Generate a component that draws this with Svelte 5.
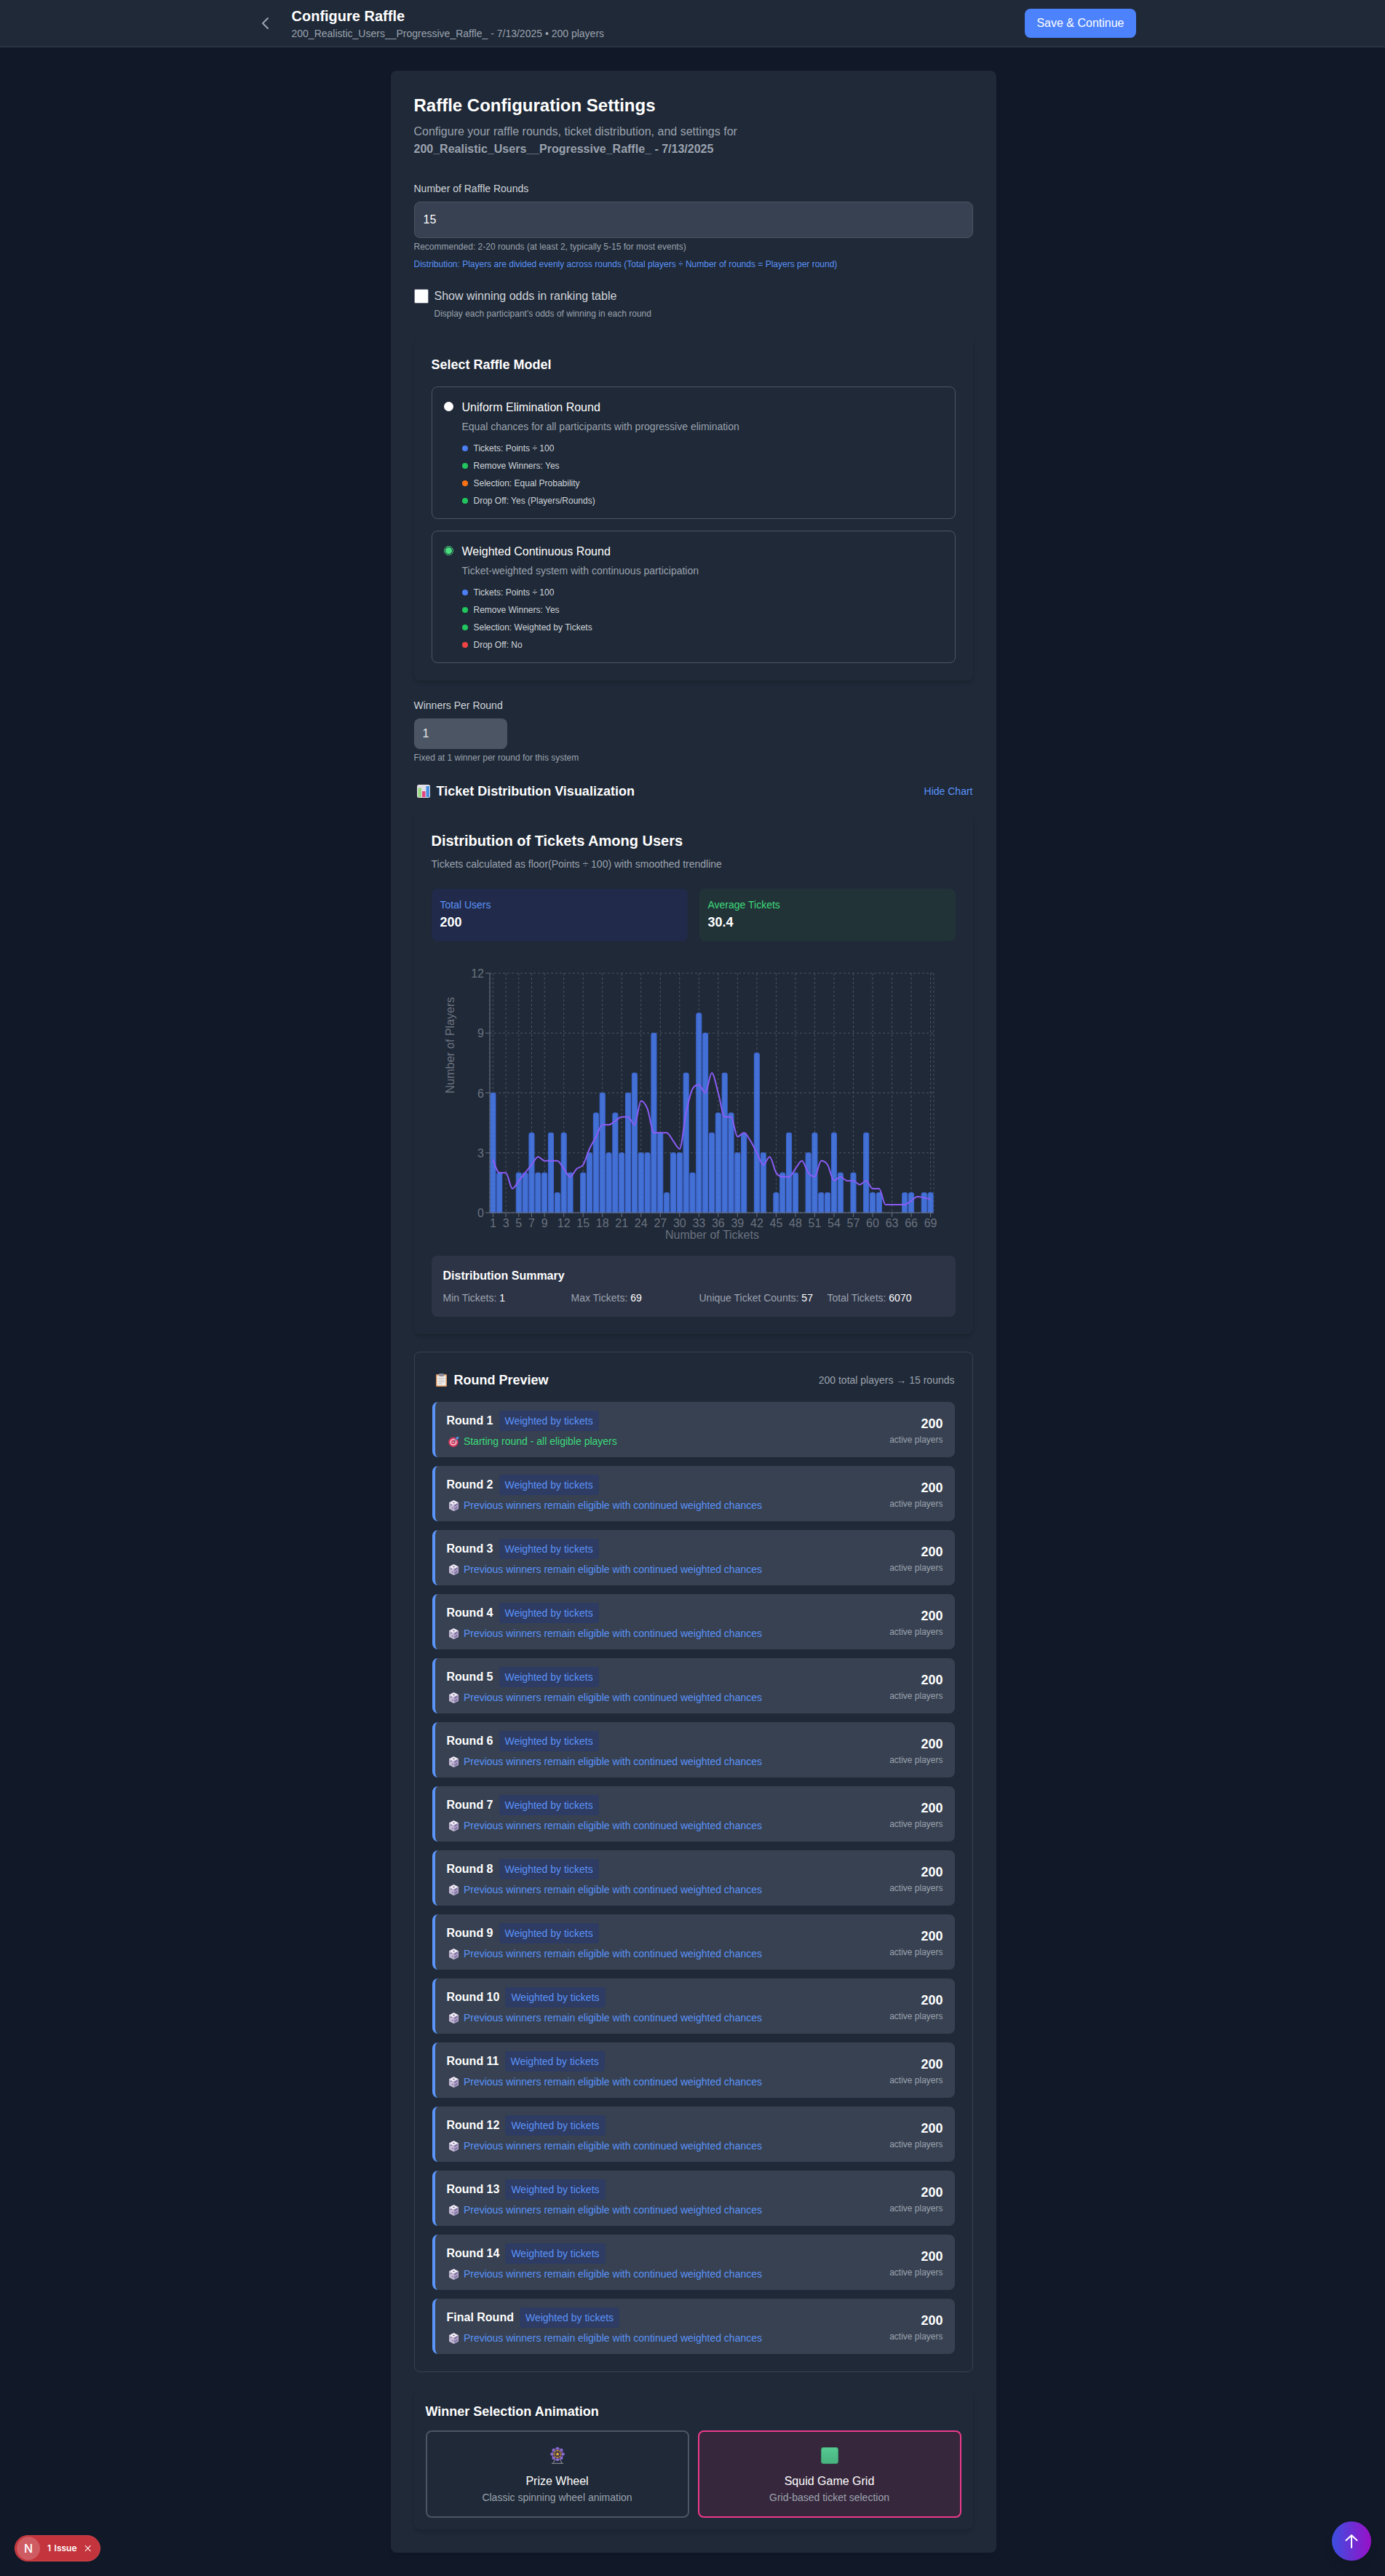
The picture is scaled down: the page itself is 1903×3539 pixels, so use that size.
<script>
  const counts = [6,2,0,0,2,2,4,2,2,4,1,4,2,0,2,3,5,6,3,5,3,6,7,3,3,9,4,1,3,3,7,2,10,9,4,5,7,5,3,4,0,8,3,0,1,2,4,2,0,3,4,1,1,4,2,0,2,0,4,1,1,0,0,0,1,1,0,1,1];
  const L = 80, R = 690, T = 20, B = 349;
  const band = (R - L) / counts.length;
  const cx = (i) => L + band * (i + 0.5);
  const vy = (v) => B - (v / 12) * (B - T);

  const xTicks = [1,3,5,7,9,12,15,18,21,24,27,30,33,36,39,42,45,48,51,54,57,60,63,66,69];
  const yTicks = [0,3,6,9,12];

  const bars = counts
    .map((v, i) => ({ v, i }))
    .filter((b) => b.v > 0)
    .map((b) => {
      const x = cx(b.i) - 3.55, y = vy(b.v), w = 7.1, r = 2;
      return `M${x},${B}V${y + r}Q${x},${y} ${x + r},${y}H${x + w - r}Q${x + w},${y} ${x + w},${y + r}V${B}Z`;
    });

  const avg = counts.map((_, i) => {
    const part = counts.slice(Math.max(0, i - 2), i + 3);
    return part.reduce((a, b) => a + b, 0) / part.length;
  });

  function monotonePath(pts) {
    const n = pts.length;
    const d = [], m = [];
    for (let i = 0; i < n - 1; i++) d.push((pts[i + 1][1] - pts[i][1]) / (pts[i + 1][0] - pts[i][0]));
    for (let i = 1; i < n - 1; i++) {
      if (d[i - 1] * d[i] <= 0) m[i] = 0;
      else {
        const s = (d[i - 1] + d[i]) / 2;
        const low = Math.min(Math.abs(d[i - 1]), Math.abs(d[i]));
        m[i] = Math.sign(d[i]) * Math.min(3 * low, Math.abs(s));
      }
    }
    m[0] = (3 * d[0] - m[1]) / 2;
    m[n - 1] = (3 * d[n - 2] - m[n - 2]) / 2;
    let p = `M${pts[0][0]},${pts[0][1]}`;
    for (let i = 0; i < n - 1; i++) {
      const h = (pts[i + 1][0] - pts[i][0]) / 3;
      p += `C${pts[i][0] + h},${pts[i][1] + m[i] * h} ${pts[i + 1][0] - h},${pts[i + 1][1] - m[i + 1] * h} ${pts[i + 1][0]},${pts[i + 1][1]}`;
    }
    return p;
  }
  const trend = monotonePath(avg.map((v, i) => [cx(i), vy(v)]));

  const models = [
    {
      name: 'Uniform Elimination Round',
      desc: 'Equal chances for all participants with progressive elimination',
      checked: false,
      items: [
        ['Tickets: Points ÷ 100', 'blue'],
        ['Remove Winners: Yes', 'green'],
        ['Selection: Equal Probability', 'orange'],
        ['Drop Off: Yes (Players/Rounds)', 'green']
      ]
    },
    {
      name: 'Weighted Continuous Round',
      desc: 'Ticket-weighted system with continuous participation',
      checked: true,
      items: [
        ['Tickets: Points ÷ 100', 'blue'],
        ['Remove Winners: Yes', 'green'],
        ['Selection: Weighted by Tickets', 'green'],
        ['Drop Off: No', 'red']
      ]
    }
  ];

  const rounds = Array.from({ length: 15 }, (_, i) => (i === 14 ? 'Final Round' : `Round ${i + 1}`));
  const pods = [0, 45, 90, 135, 180, 225, 270, 315];
</script>

{#snippet dice()}
  <svg class="ico note-ico" width="15" height="15" viewBox="0 0 28 28">
    <path d="M14 1l11 5.5v15L14 27 3 21.500v-15z" fill="#c6bcd6" stroke="#c6bcd6" stroke-width="2" stroke-linejoin="round" />
    <path d="M14 1l11 5.500L14 12 3 6.500z" fill="#f3f0f6" />
    <path d="M14 12l11-5.500v15L14 27z" fill="#a497bf" />
    <g fill="#4f3a78">
      <ellipse cx="14" cy="6.500" rx="2" ry="1.200" />
      <circle cx="7" cy="12" r="1.300" />
      <circle cx="10.500" cy="20" r="1.300" />
      <circle cx="17.500" cy="13" r="1.300" />
      <circle cx="21.500" cy="11" r="1.300" />
      <circle cx="17.500" cy="22" r="1.300" />
      <circle cx="21.500" cy="19.500" r="1.300" />
    </g>
  </svg>
{/snippet}

<div class="page">
  <header class="topbar">
    <div class="topbar-inner">
      <div class="topbar-left">
        <button class="back" aria-label="Back">
          <svg width="24" height="24" viewBox="0 0 24 24" fill="none" stroke="#9ca3af" stroke-width="2" stroke-linecap="round" stroke-linejoin="round"><path d="M15 19l-7-7 7-7" /></svg>
        </button>
        <div>
          <div class="page-title">Configure Raffle</div>
          <div class="page-sub">200_Realistic_Users__Progressive_Raffle_ - 7/13/2025 • 200 players</div>
        </div>
      </div>
      <button class="save">Save &amp; Continue</button>
    </div>
  </header>

  <main class="card">
    <h2 class="h-main">Raffle Configuration Settings</h2>
    <p class="intro">Configure your raffle rounds, ticket distribution, and settings for <strong>200_Realistic_Users__Progressive_Raffle_ - 7/13/2025</strong></p>

    <label class="label" for="rounds">Number of Raffle Rounds</label>
    <input id="rounds" class="input" type="text" value="15" />
    <p class="hint first">Recommended: 2-20 rounds (at least 2, typically 5-15 for most events)</p>
    <p class="hint dist">Distribution: Players are divided evenly across rounds (Total players ÷ Number of rounds = Players per round)</p>

    <div class="odds">
      <input id="odds" class="check" type="checkbox" />
      <div class="odds-text">
        <label for="odds">Show winning odds in ranking table</label>
        <p class="hint">Display each participant's odds of winning in each round</p>
      </div>
    </div>

    <section class="panel">
      <h3 class="h3">Select Raffle Model</h3>
      <div class="models">
        {#each models as m}
          <div class="model">
            <input class="radio" class:on={m.checked} type="radio" name="model" checked={m.checked} />
            <div>
              <div class="model-name">{m.name}</div>
              <p class="model-desc">{m.desc}</p>
              <ul class="model-list">
                {#each m.items as [text, color]}
                  <li><span class="dot {color}"></span>{text}</li>
                {/each}
              </ul>
            </div>
          </div>
        {/each}
      </div>
    </section>

    <label class="label winners-label" for="winners">Winners Per Round</label>
    <input id="winners" class="input small" type="text" value="1" disabled />
    <p class="hint first">Fixed at 1 winner per round for this system</p>

    <div class="viz-head">
      <h3 class="h3">
        <svg class="ico chart-ico" width="18" height="18" viewBox="0 0 36 36">
          <rect width="36" height="36" rx="5" fill="#e2dfe8" />
          <rect x="3" y="9" width="9" height="25" rx="1" fill="#96d97c" />
          <rect x="14" y="18" width="9" height="16" rx="1" fill="#e6447e" />
          <rect x="25" y="4" width="9" height="30" rx="1" fill="#4a90e2" />
        </svg>
        Ticket Distribution Visualization
      </h3>
      <button class="link">Hide Chart</button>
    </div>

    <section class="panel chart-panel">
      <h3 class="h4">Distribution of Tickets Among Users</h3>
      <p class="sub">Tickets calculated as floor(Points ÷ 100) with smoothed trendline</p>

      <div class="stats">
        <div class="stat blue-stat"><div class="stat-label">Total Users</div><div class="stat-value">200</div></div>
        <div class="stat green-stat"><div class="stat-label">Average Tickets</div><div class="stat-value">30.4</div></div>
      </div>

      <svg class="chart" width="720" height="390" viewBox="0 0 720 390">
        <g stroke="#4b5563" stroke-dasharray="3 3" fill="none">
          {#each yTicks as t}
            <line x1={L} x2={R} y1={vy(t)} y2={vy(t)} />
          {/each}
          <line x1={L} x2={L} y1={T} y2={B} />
          <line x1={R} x2={R} y1={T} y2={B} />
          {#each xTicks as t}
            <line x1={cx(t - 1)} x2={cx(t - 1)} y1={T} y2={B} />
          {/each}
        </g>
        <g fill="#4c82fb" fill-opacity="0.8" stroke="#3d66d6">
          {#each bars as d}
            <path {d} />
          {/each}
        </g>
        <g stroke="#6b7280" fill="none">
          <line x1={L} x2={R} y1={B} y2={B} />
          <line x1={L} x2={L} y1={T} y2={B} />
          {#each xTicks as t}
            <line x1={cx(t - 1)} x2={cx(t - 1)} y1={B} y2={B + 6} />
          {/each}
          {#each yTicks as t}
            <line x1={L - 6} x2={L} y1={vy(t)} y2={vy(t)} />
          {/each}
        </g>
        <path d={trend} fill="none" stroke="#8b5cf6" stroke-width="2" />
        <g class="tick-text">
          {#each xTicks as t}
            <text x={cx(t - 1)} y={B + 20} text-anchor="middle">{t}</text>
          {/each}
          {#each yTicks as t}
            <text x={L - 8} y={vy(t) + 6} text-anchor="end">{t}</text>
          {/each}
          <text x="385.500" y="384.500" text-anchor="middle">Number of Tickets</text>
          <text transform="translate(31 119) rotate(-90)" text-anchor="middle">Number of Players</text>
        </g>
      </svg>

      <div class="summary">
        <h4 class="summary-title">Distribution Summary</h4>
        <div class="summary-grid">
          <div>Min Tickets: <b>1</b></div>
          <div>Max Tickets: <b>69</b></div>
          <div>Unique Ticket Counts: <b>57</b></div>
          <div>Total Tickets: <b>6070</b></div>
        </div>
      </div>
    </section>

    <section class="preview">
      <div class="preview-head">
        <h3 class="h3">
          <svg class="ico clip-ico" width="15" height="18" viewBox="0 0 30 36">
            <rect y="2" width="30" height="34" rx="2.500" fill="#d9935f" />
            <rect x="3" y="5" width="24" height="28" fill="#f2eee8" />
            <rect x="8" y="0" width="14" height="8" rx="1.500" fill="#8d8b98" />
            <g fill="#bdb8bb">
              <rect x="7" y="12" width="16" height="2" />
              <rect x="7" y="17" width="16" height="2" />
              <rect x="7" y="22" width="16" height="2" />
              <rect x="7" y="27" width="10" height="2" />
            </g>
          </svg>
          Round Preview
        </h3>
        <span class="preview-meta">200 total players → 15 rounds</span>
      </div>
      <div class="rows">
        {#each rounds as r, i}
          <div class="row">
            <div>
              <div class="row-top">
                <span class="row-name">{r}</span>
                <span class="badge">Weighted by tickets</span>
              </div>
              {#if i === 0}
                <div class="row-note start">
                  <svg class="ico note-ico" width="15" height="15" viewBox="0 0 28 28">
                    <circle cx="13" cy="15.500" r="12.500" fill="#d63a60" />
                    <circle cx="13" cy="15.500" r="8.500" fill="#f2ccd6" />
                    <circle cx="13" cy="15.500" r="5.500" fill="#d63a60" />
                    <circle cx="13" cy="15.500" r="2" fill="#f7e6ea" />
                    <path d="M13 15.500L22 6" stroke="#55657f" stroke-width="2" />
                    <path d="M19 6l5-6 1 3 3 1-6 5z" fill="#4a9bf0" />
                  </svg>
                  Starting round - all eligible players
                </div>
              {:else}
                <div class="row-note">{@render dice()} Previous winners remain eligible with continued weighted chances</div>
              {/if}
            </div>
            <div class="row-right">
              <div class="row-count">200</div>
              <div class="row-active">active players</div>
            </div>
          </div>
        {/each}
      </div>
    </section>

    <section class="anim">
      <h3 class="h3">Winner Selection Animation</h3>
      <div class="anim-grid">
        <div class="anim-card">
          <div class="anim-icon">
            <svg width="22" height="24" viewBox="0 0 44 48">
              <path d="M22 22L10 46M22 22l12 24M6 46.500h32" stroke="#9a9aa6" stroke-width="2" fill="none" />
              <circle cx="22" cy="21" r="15" fill="#2c2a4a" stroke="#6f55a8" stroke-width="3" />
              <circle cx="22" cy="21" r="10" fill="none" stroke="#dca233" stroke-width="2" />
              <g stroke="#dca233" stroke-width="1.200">
                {#each pods as a}
                  <line x1="22" y1="21" x2="22" y2="9" transform="rotate({a} 22 21)" />
                {/each}
              </g>
              <g fill="#8a6bd1">
                {#each pods as a}
                  <circle cx="22" cy="5.500" r="4.200" transform="rotate({a} 22 21)" />
                {/each}
              </g>
              <circle cx="22" cy="21" r="3" fill="#f2bd3f" />
            </svg>
          </div>
          <div class="anim-name">Prize Wheel</div>
          <div class="anim-desc">Classic spinning wheel animation</div>
        </div>
        <div class="anim-card picked">
          <div class="anim-icon"><span class="green-square"></span></div>
          <div class="anim-name">Squid Game Grid</div>
          <div class="anim-desc">Grid-based ticket selection</div>
        </div>
      </div>
    </section>
  </main>

  <div class="issues">
    <span class="n">N</span>
    <span class="issue-text">1 Issue</span>
    <svg width="10" height="10" viewBox="0 0 10 10" stroke="#fff" stroke-width="1.100" fill="none"><path d="M1 1l8 8M9 1l-8 8" /></svg>
  </div>

  <button class="top" aria-label="Back to top">
    <svg width="24" height="24" viewBox="0 0 24 24" fill="none" stroke="#fff" stroke-width="2" stroke-linecap="round" stroke-linejoin="round"><path d="M12 21V4M4.500 11L12 4l7.500 7" /></svg>
  </button>
</div>

<style>
  :global(body) {
    margin: 0;
    background: #111827;
  }
  .page {
    min-height: 3539px;
    background: #111827;
    color: #fff;
    font-family: "Liberation Sans", Arial, sans-serif;
    font-size: 16px;
    line-height: 24px;
  }
  * { box-sizing: border-box; }
  h2, h3, h4, p, ul { margin: 0; padding: 0; }
  button { font-family: inherit; cursor: pointer; }

  .topbar {
    background: #1f2937;
    border-bottom: 1px solid #374151;
    height: 65px;
  }
  .topbar-inner {
    width: 1280px;
    margin-left: calc(50% - 639px);
    padding: 8px 32px;
    display: flex;
    justify-content: space-between;
    align-items: center;
  }
  .topbar-left { display: flex; align-items: center; gap: 16px; }
  .back { background: none; border: 0; padding: 8px; width: 40px; height: 40px; display: flex; }
  .page-title { font-size: 20px; line-height: 28px; font-weight: 700; }
  .page-sub { font-size: 14px; line-height: 20px; color: #9ca3af; }
  .save {
    height: 40px;
    padding: 0 16px;
    border: 0;
    border-radius: 8px;
    background: #4c82fb;
    color: #fff;
    font-size: 16px;
    font-weight: 500;
  }

  .card {
    width: 832px;
    margin: 32px 0 32px calc(50% - 415px);
    padding: 32px;
    background: #1f2937;
    border-radius: 8px;
    box-shadow: 0 4px 6px -1px rgba(0,0,0,.1);
  }
  .h-main { font-size: 24px; line-height: 32px; font-weight: 700; margin-bottom: 8px; }
  .intro { color: #9ca3af; margin-bottom: 32px; }
  .intro strong { font-weight: 700; }

  .label { display: block; font-size: 14px; line-height: 20px; color: #d1d5db; margin-bottom: 8px; }
  .input {
    display: block;
    width: 100%;
    height: 50px;
    padding: 12px;
    background: #374151;
    border: 1px solid #4b5563;
    border-radius: 8px;
    color: #fff;
    font: 16px/24px "Liberation Sans", Arial, sans-serif;
    outline: none;
  }
  .input.small {
    width: 128px;
    height: 42px;
    padding: 8px 12px;
    background: #4b5563;
    border: 0;
    opacity: 1;
    color: #e5e7eb;
  }
  .hint { font-size: 12px; line-height: 16px; color: #9ca3af; }
  .hint.first { margin-top: 4px; }
  .hint.dist { margin-top: 8px; color: #5b93f8; }

  .odds { display: flex; gap: 8px; margin-top: 26px; }
  .check {
    appearance: none;
    width: 20px;
    height: 20px;
    margin: 0;
    background: #fff;
    border: 1px solid #6b7280;
    border-radius: 2px;
    flex: none;
  }
  .odds-text label { display: block; color: #d1d5db; line-height: 20px; }
  .odds-text .hint { margin-top: 6px; }

  .panel {
    margin-top: 24px;
    padding: 24px;
    border-radius: 8px;
    box-shadow: 0 4px 6px -1px rgba(0,0,0,.1), 0 2px 4px -2px rgba(0,0,0,.1);
  }
  .h3 { font-size: 18px; line-height: 28px; font-weight: 700; }
  .models { margin-top: 16px; display: flex; flex-direction: column; gap: 16px; }
  .model {
    display: flex;
    gap: 12px;
    padding: 16px;
    border: 1px solid #4b5563;
    border-radius: 8px;
  }
  .radio {
    appearance: none;
    flex: none;
    width: 13px;
    height: 13px;
    margin: 4px 0 0;
    border-radius: 50%;
    background: #fff;
  }
  .radio.on {
    background: radial-gradient(circle, #4ade80 0 4.200px, #1f2937 4.700px);
    border: 1px solid #4ade80;
  }
  .model-name { color: #fff; }
  .model-desc { margin-top: 4px; font-size: 14px; line-height: 20px; color: #9ca3af; }
  .model-list { margin-top: 12px; list-style: none; display: flex; flex-direction: column; gap: 8px; }
  .model-list li { display: flex; align-items: center; gap: 8px; font-size: 12px; line-height: 16px; color: #d1d5db; }
  .dot { width: 8px; height: 8px; border-radius: 50%; }
  .dot.blue { background: #4c7ff5; }
  .dot.green { background: #22c55e; }
  .dot.orange { background: #f97316; }
  .dot.red { background: #ef4444; }

  .winners-label { margin-top: 24px; }
  .viz-head { display: flex; justify-content: space-between; align-items: center; margin-top: 24px; }
  .ico { vertical-align: -3px; }
  .chart-ico { margin: 0 4px; }
  .clip-ico { margin: 0 5px; }
  .note-ico { margin: 0 2.500px 0 2px; vertical-align: -3px; }
  .link { background: none; border: 0; padding: 0; color: #5b93f8; font-size: 14px; line-height: 20px; }

  .chart-panel { margin-top: 16px; }
  .h4 { font-size: 20px; line-height: 28px; font-weight: 700; }
  .sub { margin-top: 8px; font-size: 14px; line-height: 20px; color: #9ca3af; }
  .stats { display: grid; grid-template-columns: 1fr 1fr; gap: 16px; margin-top: 24px; }
  .stat { height: 72px; padding: 12px; border-radius: 8px; }
  .blue-stat { background: #212a4a; }
  .green-stat { background: #223338; }
  .stat-label { font-size: 14px; line-height: 20px; }
  .blue-stat .stat-label { color: #5b93f8; }
  .green-stat .stat-label { color: #3ddc7a; }
  .stat-value { font-size: 18px; line-height: 28px; font-weight: 700; }

  .chart { display: block; margin-top: 24px; }
  .tick-text text { fill: #6b7280; font-size: 16px; }

  .summary {
    margin-top: 18px;
    padding: 16px;
    background: #2d3446;
    border-radius: 8px;
  }
  .summary-title { font-size: 16px; line-height: 24px; font-weight: 700; }
  .summary-grid {
    display: grid;
    grid-template-columns: repeat(4, 1fr);
    gap: 16px;
    margin-top: 8px;
    font-size: 14px;
    line-height: 20px;
    color: #9ca3af;
  }
  .summary-grid b { color: #fff; font-weight: 500; }

  .preview {
    margin-top: 24px;
    padding: 24px;
    border: 1px solid #374151;
    border-radius: 8px;
  }
  .preview-head { display: flex; justify-content: space-between; align-items: center; }
  .preview-meta { font-size: 14px; line-height: 20px; color: #9ca3af; }
  .rows { margin-top: 16px; display: flex; flex-direction: column; gap: 12px; }
  .row {
    height: 76px;
    padding: 12px 16px;
    display: flex;
    justify-content: space-between;
    align-items: center;
    background: #374151;
    border-left: 4px solid #5b95f9;
    border-radius: 8px;
  }
  .row-top { display: flex; align-items: center; gap: 8px; }
  .row-name { font-weight: 700; }
  .badge {
    padding: 4px 8px;
    font-size: 14px;
    line-height: 20px;
    color: #5b93f8;
    background: #2e3b63;
    border-radius: 4px;
  }
  .row-note { margin-top: 4px; font-size: 14px; line-height: 20px; color: #5b93f8; }
  .row-note.start { color: #3ddc7a; }
  .row-right { text-align: right; }
  .row-count { font-size: 18px; line-height: 28px; font-weight: 700; }
  .row-active { font-size: 12px; line-height: 16px; color: #9ca3af; }

  .anim {
    margin-top: 24px;
    padding: 16px;
    border-radius: 8px;
    box-shadow: 0 4px 6px -1px rgba(0,0,0,.1), 0 2px 4px -2px rgba(0,0,0,.1);
  }
  .anim-grid { display: grid; grid-template-columns: 1fr 1fr; gap: 12px; margin-top: 12px; }
  .anim-card {
    padding: 16px;
    border: 2px solid #4b5563;
    border-radius: 8px;
    text-align: center;
  }
  .anim-card.picked { border-color: #ec3a8c; background: #37273c; }
  .anim-icon { height: 32px; margin-bottom: 8px; display: flex; align-items: center; justify-content: center; }
  .green-square {
    width: 24px;
    height: 23px;
    border-radius: 3px;
    background: linear-gradient(180deg, #57c991, #47b37f);
    border: 1px solid #3f9a70;
  }
  .anim-name { font-weight: 500; }
  .anim-desc { font-size: 14px; line-height: 20px; color: #9ca3af; }

  .issues {
    position: fixed;
    left: 20px;
    bottom: 20px;
    width: 118px;
    height: 36px;
    padding: 0 12px 0 2px;
    display: flex;
    align-items: center;
    gap: 10px;
    border-radius: 18px;
    background: #c4343c;
    border: 1px solid #d6474d;
    font-family: Inter, sans-serif;
    font-size: 12px;
    font-weight: 600;
  }
  .n {
    width: 32px;
    height: 32px;
    flex: none;
    border-radius: 50%;
    background: rgba(255,255,255,.2);
    display: flex;
    align-items: center;
    justify-content: center;
    font-size: 16px;
    font-weight: 500;
  }
  .issue-text { white-space: nowrap; word-spacing: 1.500px; }
  .top {
    position: fixed;
    right: 19px;
    bottom: 21px;
    width: 54px;
    height: 54px;
    padding: 15px;
    border: 0;
    border-radius: 50%;
    background: linear-gradient(90deg, #3b4fe0, #9a10c8);
    box-shadow: 0 10px 15px -3px rgba(0,0,0,.1);
    display: flex;
  }
</style>
